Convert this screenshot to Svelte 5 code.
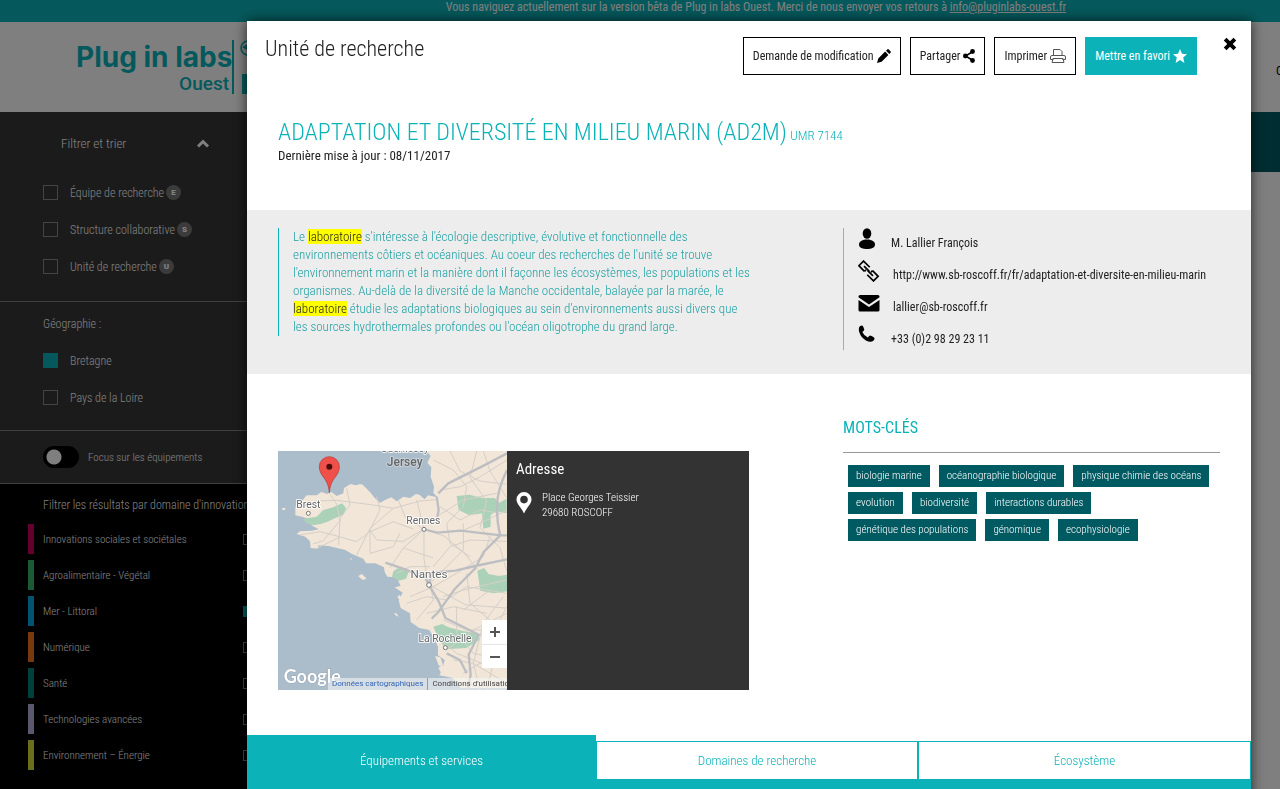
<script>
  const types = [
    { id: 'equipe', label: 'Équipe de recherche', badge: 'E' },
    { id: 'structure', label: 'Structure collaborative', badge: 'S' },
    { id: 'unite', label: 'Unité de recherche', badge: 'U' },
  ];

  let regions = $state([
    { id: 'bretagne', label: 'Bretagne', checked: true },
    { id: 'loire', label: 'Pays de la Loire', checked: false },
  ]);

  let domains = $state([
    { id: 'social', label: 'Innovations sociales et sociétales', color: '#c8005c', checked: false },
    { id: 'agro', label: 'Agroalimentaire - Végétal', color: '#38b56c', checked: false },
    { id: 'mer', label: 'Mer - Littoral', color: '#00a8e0', checked: true },
    { id: 'num', label: 'Numérique', color: '#f07020', checked: false },
    { id: 'sante', label: 'Santé', color: '#008078', checked: false },
    { id: 'tech', label: 'Technologies avancées', color: '#b4b0d8', checked: false },
    { id: 'env', label: 'Environnement – Énergie', color: '#d4dc38', checked: false },
  ]);

  const keywords = [
    'biologie marine',
    'océanographie biologique',
    'physique chimie des océans',
    'evolution',
    'biodiversité',
    'interactions durables',
    'génétique des populations',
    'génomique',
    'ecophysiologie',
  ];

  const tabs = ['Équipements et services', 'Domaines de recherche', 'Écosystème'];

  let focus = $state(false);
  let activeTab = $state(0);
  let open = $state(true);
</script>

<div class="page">
  <div class="beta">
    Vous naviguez actuellement sur la version bêta de Plug in labs Ouest. Merci de nous envoyer vos retours à
    <a href="mailto:info@pluginlabs-ouest.fr">info@pluginlabs-ouest.fr</a>
  </div>

  <header class="site-header">
    <a class="logo" href="/">
      <span class="logo-text">
        <span class="logo-name">Plug in labs</span>
        <span class="logo-place">Ouest</span>
      </span>
      <svg class="logo-mark" width="30" height="54" viewBox="0 0 30 54">
        <circle cx="14" cy="8" r="7" fill="none" stroke="#0bb2b8" stroke-width="1.500" />
        <path d="M8 7l5 3 3-7z" fill="#0bb2b8" />
        <rect x="8" y="34" width="20" height="20" fill="#0bb2b8" />
      </svg>
    </a>
    <nav><a href="#contact">C</a></nav>
  </header>

  <div class="body">
    <aside class="sidebar">
      <section class="block types">
        <button class="sidebar-title">
          Filtrer et trier
          <svg width="14" height="9" viewBox="0 0 14 9"><path d="M2 7.5l5-5 5 5" fill="none" stroke="#fff" stroke-width="3" /></svg>
        </button>
        {#each types as type}
          <label class="check" for={type.id}>
            <input type="checkbox" id={type.id} />
            <span>{type.label}</span>
            <span class="badge">{type.badge}</span>
          </label>
        {/each}
      </section>

      <section class="block geo">
        <h3>Géographie :</h3>
        {#each regions as region}
          <label class="check" for={region.id}>
            <input type="checkbox" id={region.id} bind:checked={region.checked} />
            <span>{region.label}</span>
          </label>
        {/each}
      </section>

      <section class="block">
        <label class="toggle" for="focus">
          <input type="checkbox" id="focus" bind:checked={focus} />
          <span>Focus sur les équipements</span>
        </label>
      </section>

      <section class="domains">
        <h3>Filtrer les résultats par domaine d'innovation</h3>
        {#each domains as domain}
          <label class="domain" for={domain.id}>
            <span class="stripe" style="background: {domain.color}"></span>
            <span class="domain-name">{domain.label}</span>
            <input type="checkbox" id={domain.id} bind:checked={domain.checked} />
          </label>
        {/each}
      </section>
    </aside>
    <div class="results"></div>
  </div>
</div>

{#if open}
  <div class="backdrop">
    <div class="modal" role="dialog" aria-labelledby="unit-name">
      <div class="modal-header">
        <h1>Unité de recherche</h1>
        <div class="actions">
          <button class="action">
            Demande de modification
            <svg width="14" height="14" viewBox="0 0 14 14"><path d="M0 14l1.300-4.600 6.800-6.800 3.300 3.300-6.800 6.800zM9 1.700l1.200-1.200q.8-.8 1.600 0l1.700 1.700q.8.8 0 1.600L12.300 5z" /></svg>
          </button>
          <button class="action">
            Partager
            <svg width="12" height="14" viewBox="0 0 12 14"><path d="M10 2.500L2.500 7l7.500 4.500" fill="none" stroke="#000" stroke-width="1.500" /><circle cx="9.500" cy="2.500" r="2.400" /><circle cx="2.400" cy="7" r="2.400" /><circle cx="9.500" cy="11.500" r="2.400" /></svg>
          </button>
          <button class="action">
            Imprimer
            <svg width="16" height="14" viewBox="0 0 16 14" fill="none" stroke="#555"><path d="M3.500 6.500v-6h6.500l2 2v4M3.500 10.500h-3V8q0-1.500 1.500-1.500h12q1.500 0 1.500 1.500v2.500h-3M3 9.500h10l1 4H2z" /></svg>
          </button>
          <button class="action favorite">
            Mettre en favori
            <svg width="14" height="14" viewBox="0 0 14 14"><path d="M7 0l2 4.700 5 .5-3.800 3.300L11.400 14 7 11 2.600 14l1.200-5.500L0 5.200l5-.5z" fill="#fff" /></svg>
          </button>
        </div>
        <button class="close" aria-label="Fermer" onclick={() => (open = false)}>
          <svg width="14" height="14" viewBox="0 0 13 13"><path d="M2 2l9 9M11 2l-9 9" stroke="#000" stroke-width="3.600" /></svg>
        </button>
      </div>

      <div class="intro">
        <h2 id="unit-name">ADAPTATION ET DIVERSITÉ EN MILIEU MARIN (AD2M) <small>UMR 7144</small></h2>
        <p>Dernière mise à jour : 08/11/2017</p>
      </div>

      <div class="summary columns">
        <blockquote>
          Le <mark>laboratoire</mark> s'intéresse à l'écologie descriptive, évolutive et fonctionnelle des
          environnements côtiers et océaniques. Au coeur des recherches de l'unité se trouve
          l'environnement marin et la manière dont il façonne les écosystèmes, les populations et les
          organismes. Au-delà de la diversité de la Manche occidentale, balayée par la marée, le
          <mark>laboratoire</mark> étudie les adaptations biologiques au sein d'environnements aussi divers que
          les sources hydrothermales profondes ou l'océan oligotrophe du grand large.
        </blockquote>
        <ul class="contact">
          <li>
            <svg width="22" height="22" viewBox="0 0 22 22"><ellipse cx="9" cy="5.500" rx="4.300" ry="5.200" /><path d="M1 16.500C1 13 5 11.500 9 11.500s8 1.500 8 5S13 21 9 21s-8-1-8-4.500z" /></svg>
            <span>M. Lallier François</span>
          </li>
          <li>
            <svg width="22" height="22" viewBox="0 0 22 22" fill="none" stroke="#000" stroke-width="1.900"><g transform="translate(10.500 11) rotate(45) scale(.88)"><path d="M-2 -4H-12V3.500H-3M-7.500 -0.300H1" /><path d="M2 4H12V-3.500H3M7.500 0.300H-1M-3 3.500V1M3 -3.500V-1" /></g></svg>
            <a href="http://www.sb-roscoff.fr/fr/adaptation-et-diversite-en-milieu-marin">http://www.sb-roscoff.fr/fr/adaptation-et-diversite-en-milieu-marin</a>
          </li>
          <li>
            <svg width="22" height="22" viewBox="0 0 22 22"><path d="M2 3h18q1.500 0 1.500 1.500v.8L11 12.500.5 5.300v-.8Q.5 3 2 3zM.5 8L11 15l10.500-7v10q0 1.500-1.500 1.500H2Q.5 19.500.5 18z" /></svg>
            <a href="mailto:lallier@sb-roscoff.fr">lallier@sb-roscoff.fr</a>
          </li>
          <li>
            <svg width="22" height="22" viewBox="0 0 22 22"><path d="M1 3.500q1-2 3-2 1 0 2.300 4 0 1-2 2.500 1.500 3.500 5.500 5.500 1.500-2 2.500-2 4 1.500 4.200 2.800 0 2.500-3.500 3.500-4 .5-9-4.500Q0 8 1 3.500z" /></svg>
            <span>+33 (0)2 98 29 23 11</span>
          </li>
        </ul>
      </div>

      <div class="details columns">
        <div class="location">
          <div class="map">
            <svg viewBox="24 33 687 717" preserveAspectRatio="xMidYMid slice" role="img" aria-label="Carte de Bretagne">
              <rect x="24" y="33" width="687" height="717" fill="#abbccb" />
              <g fill="#f1e6d8">
                <path d="M470 33l12 15-10 20 12 14-2 28 10 30-2 18 12 14-28-6-10 12-16-14-10-2-18 12-20-4-20 14-16-12-14 6-20 10-16-14-12-16-24-24-8-2-12 4-16-4-20 12-2 16-20 8-16-12-12 6-18-6-14 10-30 0-12 14-18 6-4 18 0 22 20 4 24 8 24 14-20 4 22 12-20 4-36 2-10 8 26 8 14 14 2 20 22 2 2-10 30 2 50 12 20 12 34 14 8 14 28 0 26 12 2 14 8 14 28 2 12 26-18 4 24 16-12 22 6 24 28 16 2 26 26 18 30 6 14 24 12 26 0 26 20 14-8 30-8 16 40 8 24 30H720V33z" />
                <path d="M264 408l12-6 14 14-12 4zM382 472l6-8 8 12 0 10zM372 520l8 0 6 10-10-4zM495 648l16 4 8 22-12 4zM505 685l12-12 8 30-6 4zM36 204l10 0 0 5-8 2zM238 354l8 2-2 4z" />
              </g>
              <g fill="#abd2b8">
                <path d="M100 236l40-6 20-20 30-8 26-12 12 14-8 20-24 10-20 10-24 8-28 4-16-8z" />
                <path d="M560 168l38-4 40 10 36 0 14 14 22-12v44l-30-6-18 10 0 36-22 6-4-46-38 6-32-16z" />
                <path d="M370 394l14-10 20 4 12 8-8 20-22 6-20-12z" />
                <path d="M622 392l20-8 14 18 30 6 25-4v50l-40 6-40-8z" />
                <path d="M490 560l26-8 20 10 40 10 46 8 6 20-40 24-60 4-22-30z" />
              </g>
              <g fill="none" stroke="#d5cfc9" stroke-width="3">
                <path d="M80 205l60-22 60-2 110 14 60 10 80-22 50-4M180 162l20 30 10 50-50 60-30 10M90 285l60-10 40 10 70 20 40-30 70-30 60 22M230 145l10 50-30 40-4 80M320 170l10 40-30 60 0 70M300 270l20 30 80 4 60-36M385 180l20 50 56 38M300 340l70-20 20-40M440 180l22 88M140 325l70-34M260 345l40-80 70-60M360 384l40-60 62-56M380 400l40-20 60 0M462 268l60 20 60 50 40 50M462 268l0 90 14 76M490 380l50-60 60-20 110 4M400 324l90 30" />
                <path d="M540 33l30 60 60 30 80 10M510 200l60 40 60-30 60 10M490 60l60 30 40 50-10 60-50 50 10 60 60 40M620 33l-20 80 50 70-20 80 60 60 20 70M711 60l-80 50-60 30-60 10M580 250l0 80-60 60-40 40M640 33l20 60 50 80M500 230l80-50 100-20M660 290l-20 60-80 50-70 40-70 30M711 210l-60 30-70 30" />
                <path d="M410 490l60-20 60 10 60-40 120 20M440 540l50-60-10-50M476 434l110 60 120 10M520 540l70 30 120 0M560 500l0 80 50 60 100 20M530 630l80-60 100-50M590 400l10 90 60 50 10 130-20 80M700 470l-60 80-30 120 20 80M500 590l60 50 100 40 50-10M550 660l60 10 100 60M620 590l60-30 30-60M520 470l60-20 130-30M580 510l80-60M580 700l50-30 80-10M470 520l80-20 100 20" />
              </g>
              <g fill="none" stroke="#bdbec2" stroke-width="7">
                <path d="M505 160l30-30 100-50 76-40M500 170l6 40-4 20M462 268l40 10 70-6 120 14 19 0M711 90q-30 60-30 110 0 50 10 86l-50 50-26 50-60 60-50 70-20 20M476 434l30 50 20 50 60 30 40 20-30 60 6 60-10 50M476 434l10-36 70-6 60-14 95-20M476 434l-10-20-60-26-60-20M530 640l40 20 20 40" />
              </g>
              <g class="labels">
                <text x="404" y="36">Guernesey</text>
                <text x="404" y="79" class="island">Jersey</text>
                <text x="115" y="204">Brest</text>
                <text x="460" y="251">Rennes</text>
                <text x="477" y="415" class="large">Nantes</text>
                <text x="525" y="605">La Rochelle</text>
              </g>
              <g fill="#fff" stroke="#777" stroke-width="3">
                <circle cx="115" cy="220" r="6" />
                <circle cx="462" cy="268" r="6" />
                <circle cx="477" cy="435" r="7" />
                <circle cx="526" cy="623" r="6" />
              </g>
              <path d="M178 158c-2-26-10-36-20-50-6-8-10-18-10-28a30 30 0 0 1 60 0c0 10-4 20-10 28-10 14-18 24-20 50z" fill="#f0504a" stroke="#b8332f" stroke-width="2" />
              <circle cx="178" cy="80" r="9" fill="#4a0f0d" />
              <text x="41" y="728" class="google">Google</text>
            </svg>
            <div class="zoom">
              <button aria-label="Zoom avant"><svg width="10" height="10" viewBox="0 0 10 10"><path d="M5 0v10M0 5h10" stroke="#555" stroke-width="2" /></svg></button>
              <button aria-label="Zoom arrière"><svg width="10" height="10" viewBox="0 0 10 10"><path d="M0 5h10" stroke="#555" stroke-width="2" /></svg></button>
            </div>
            <div class="legal">
              <a class="data" href="#donnees">Données cartographiques</a>
              <a href="#conditions">Conditions d'utilisation</a>
            </div>
          </div>
          <div class="address">
            <h3>Adresse</h3>
            <div class="place">
              <svg width="16" height="22" viewBox="0 0 16 22"><path d="M8 0a7.500 7.500 0 0 1 7.500 7.500C15.500 12 11 15 8 21.500 5 15 .5 12 .5 7.500A7.500 7.500 0 0 1 8 0zm0 3.800a3.800 3.800 0 1 0 0 7.600 3.800 3.800 0 0 0 0-7.600z" fill="#fff" fill-rule="evenodd" /></svg>
              <p>Place Georges Teissier<br />29680 ROSCOFF</p>
            </div>
          </div>
        </div>
        <div class="keywords">
          <h3>MOTS-CLÉS</h3>
          <ul>
            {#each keywords as keyword}
              <li>{keyword}</li>
            {/each}
          </ul>
        </div>
      </div>

      <div class="tabs" role="tablist">
        {#each tabs as tab, i}
          <button role="tab" class:active={activeTab === i} aria-selected={activeTab === i} onclick={() => (activeTab = i)}>{tab}</button>
        {/each}
      </div>
      <div class="panel"></div>
    </div>
  </div>
{/if}

<style>
  :global(body) {
    margin: 0;
    overflow: hidden;
    color: #222;
    font-family: "Roboto Condensed", "Liberation Sans Narrow", Roboto, sans-serif;
    font-size: 12px;
    font-weight: 300;
  }

  h1,
  h2,
  h3,
  p,
  ul,
  blockquote {
    margin: 0;
    padding: 0;
    font-weight: 300;
    list-style: none;
  }

  a {
    color: inherit;
    text-decoration: none;
  }

  button {
    margin: 0;
    padding: 0;
    border: none;
    border-radius: 0;
    background: none;
    color: inherit;
    font: inherit;
    cursor: pointer;
  }

  svg {
    flex: none;
  }

  .page {
    height: 100vh;
    overflow: hidden;
    background: #fff;
  }

  .beta {
    height: 22px;
    padding-left: 232px;
    box-sizing: border-box;
    background: #0bb2b8;
    color: #fff;
    font-weight: 400;
    line-height: 15px;
    text-align: center;
    white-space: nowrap;
  }

  .beta a {
    text-decoration: underline;
  }

  .site-header {
    display: flex;
    justify-content: space-between;
    align-items: center;
    height: 90px;
    padding-left: 76px;
  }

  .logo {
    display: flex;
    color: #0bb2b8;
  }

  .logo-text {
    display: flex;
    flex-direction: column;
    align-items: flex-end;
    width: 156px;
    height: 54px;
    border-right: 2px solid #0bb2b8;
    overflow: hidden;
    white-space: nowrap;
  }

  .logo-name {
    align-self: flex-start;
    font-family: Inter, "Open Sans", sans-serif;
    font-size: 28px;
    font-weight: 700;
    line-height: 34px;
  }

  .logo-place {
    padding-right: 3px;
    font-family: Roboto, sans-serif;
    font-size: 19px;
    font-weight: 500;
    line-height: 20px;
  }

  .site-header nav {
    width: 4px;
    padding-top: 8px;
    overflow: hidden;
    color: #000;
    font-weight: 400;
  }

  .body {
    display: flex;
  }

  .results {
    flex: 1;
    height: 60px;
    background: #005a62;
  }

  .sidebar {
    width: 284px;
    background: #363636;
    color: #fff;
  }

  .block {
    padding-left: 43px;
    border-bottom: 1px solid #808080;
  }

  .types {
    padding-bottom: 16px;
  }

  .sidebar-title {
    display: flex;
    justify-content: space-between;
    align-items: center;
    width: 166px;
    height: 62px;
    margin-left: 18px;
    font-size: 13px;
  }

  .sidebar-title svg {
    margin-right: 17px;
  }

  .sidebar h3 {
    font-size: 12px;
  }

  .check {
    display: flex;
    align-items: center;
    height: 37px;
  }

  .check input,
  .domain input {
    appearance: none;
    box-sizing: border-box;
    flex: none;
    width: 15px;
    height: 15px;
    margin: 0 12px 0 0;
    border: 1px solid #888;
  }

  .check input:checked,
  .domain input:checked {
    border-color: #0bb2b8;
    background: #0bb2b8;
  }

  .badge {
    width: 15px;
    margin-left: 2px;
    border-radius: 50%;
    background: #777;
    font-family: Roboto, sans-serif;
    font-size: 8px;
    font-weight: 900;
    line-height: 15px;
    text-align: center;
  }

  .geo {
    padding-top: 4px;
    padding-bottom: 14px;
  }

  .geo h3 {
    line-height: 36px;
  }

  .toggle {
    display: flex;
    align-items: center;
    height: 52px;
    font-size: 11px;
  }

  .toggle input {
    appearance: none;
    width: 36px;
    height: 22px;
    margin: 0 9px 0 0;
    border-radius: 11px;
    background: radial-gradient(circle at 11px 11px, #fff 7px, #000 8px);
  }

  .domains {
    height: 400px;
    padding: 6px 0 0 28px;
    background: #000;
  }

  .domains h3 {
    padding-left: 15px;
    line-height: 31px;
    white-space: nowrap;
  }

  .domain {
    display: flex;
    align-items: center;
    height: 36px;
    font-size: 11px;
  }

  .domain input {
    width: 11px;
    height: 11px;
  }

  .stripe {
    width: 6px;
    height: 30px;
    margin-right: 9px;
  }

  .domain-name {
    width: 200px;
  }

  .backdrop {
    position: fixed;
    inset: 0;
    padding: 21px 29px 0 247px;
    overflow: hidden;
    background: rgba(0, 0, 0, 0.5);
  }

  .modal {
    background: #fff;
    box-shadow: 0 0 12px rgba(0, 0, 0, 0.7);
  }

  .modal-header {
    display: flex;
    padding: 16px 14px 0 18px;
  }

  .modal-header h1 {
    flex: 1;
    font-size: 22px;
    line-height: 23px;
  }

  .actions {
    display: flex;
    gap: 9px;
  }

  .action {
    display: flex;
    align-items: center;
    gap: 3px;
    height: 38px;
    padding: 0 9px;
    border: 1px solid #000;
    font-weight: 400;
    white-space: nowrap;
  }

  .favorite {
    border-color: #0bb2b8;
    background: #0bb2b8;
    color: #fff;
  }

  .close {
    align-self: flex-start;
    height: 14px;
    margin-left: 26px;
  }

  .intro {
    padding: 42px 31px 45px;
  }

  .intro h2 {
    color: #0bb2b8;
    font-size: 24px;
    line-height: 30px;
    white-space: nowrap;
  }

  .intro small {
    margin-left: -2px;
    font-size: 13px;
    line-height: 13px;
  }

  .intro p {
    font-size: 13px;
    font-weight: 400;
    line-height: 18px;
  }

  .columns {
    display: grid;
    grid-template-columns: 5fr 4fr;
    column-gap: 94px;
    align-items: start;
    padding: 0 31px;
  }

  .summary {
    padding-top: 18px;
    padding-bottom: 24px;
    background: #ededed;
  }

  blockquote {
    margin-right: -4px;
    padding-left: 14px;
    border-left: 1px solid #0bb2b8;
    color: #1da0a3;
    font-size: 13px;
    line-height: 18px;
  }

  mark {
    background: #ff0;
    color: #222;
  }

  .contact {
    display: grid;
    gap: 6px;
    padding-left: 14px;
    border-left: 1px solid #aaa;
    font-weight: 400;
    line-height: 22px;
  }

  .contact li {
    display: flex;
    gap: 11px;
    white-space: nowrap;
  }

  .contact span,
  .contact a {
    padding-top: 4px;
  }

  .contact a {
    margin-left: 2px;
  }

  .details {
    padding-top: 44px;
    padding-bottom: 45px;
  }

  .location {
    display: flex;
    height: 239px;
    margin-top: 33px;
  }

  .map {
    position: relative;
    width: 229px;
    overflow: hidden;
  }

  .map > svg {
    display: block;
    width: 100%;
    height: 100%;
  }

  .labels {
    fill: #666;
    stroke: #fff;
    stroke-width: 5px;
    paint-order: stroke;
    font-family: Roboto, sans-serif;
    font-size: 31px;
    font-weight: 400;
    text-anchor: middle;
  }

  .labels .large {
    font-size: 35px;
  }

  .labels .island {
    stroke: #cdd6de;
    font-size: 36px;
    font-weight: 500;
  }

  .google {
    fill: #fff;
    stroke: #8a97a3;
    stroke-width: 2px;
    paint-order: stroke;
    font-family: Lato, sans-serif;
    font-size: 54px;
    font-weight: 700;
  }

  .zoom {
    position: absolute;
    right: 0;
    bottom: 22px;
    width: 25px;
    background: #fff;
  }

  .zoom button {
    display: flex;
    justify-content: center;
    align-items: center;
    width: 25px;
    height: 24px;
  }

  .zoom button + button {
    border-top: 1px solid #e6e6e6;
  }

  .legal {
    position: absolute;
    left: 50px;
    bottom: 0;
    display: flex;
    background: rgba(245, 245, 245, 0.6);
    color: #444;
    font-family: Roboto, sans-serif;
    font-size: 8px;
    font-weight: 400;
    line-height: 12px;
    white-space: nowrap;
  }

  .legal a {
    padding: 0 4px;
  }

  .legal .data {
    border-right: 1px solid #999;
    color: #3367b5;
  }

  .address {
    flex: 1;
    padding: 8px 9px;
    background: #333;
    color: #fff;
  }

  .address h3 {
    font-size: 15px;
    font-weight: 400;
    line-height: 20px;
  }

  .place {
    display: flex;
    gap: 10px;
    padding-top: 11px;
    font-size: 11px;
    line-height: 15px;
  }

  .place svg {
    margin-top: 2px;
  }

  .keywords h3 {
    padding-bottom: 14px;
    border-bottom: 1px solid #999;
    color: #0bb2b8;
    font-size: 16px;
    font-weight: 400;
    line-height: 20px;
  }

  .keywords ul {
    display: flex;
    flex-wrap: wrap;
    gap: 5px 9px;
    padding: 12px 5px 0;
  }

  .keywords li {
    padding: 0 8px;
    background: #005a62;
    color: #fff;
    font-size: 11px;
    line-height: 22px;
  }

  .tabs {
    display: grid;
    grid-template-columns: 349fr 322fr 333fr;
    align-items: end;
    color: #0bb2b8;
    font-size: 13px;
  }

  .tabs button {
    height: 38px;
    border: 1px solid #0bb2b8;
    border-bottom: none;
  }

  .tabs .active {
    height: 44px;
    padding-top: 6px;
    background: #0bb2b8;
    color: #fff;
  }

  .panel {
    height: 200px;
    background: #0bb2b8;
  }
</style>
